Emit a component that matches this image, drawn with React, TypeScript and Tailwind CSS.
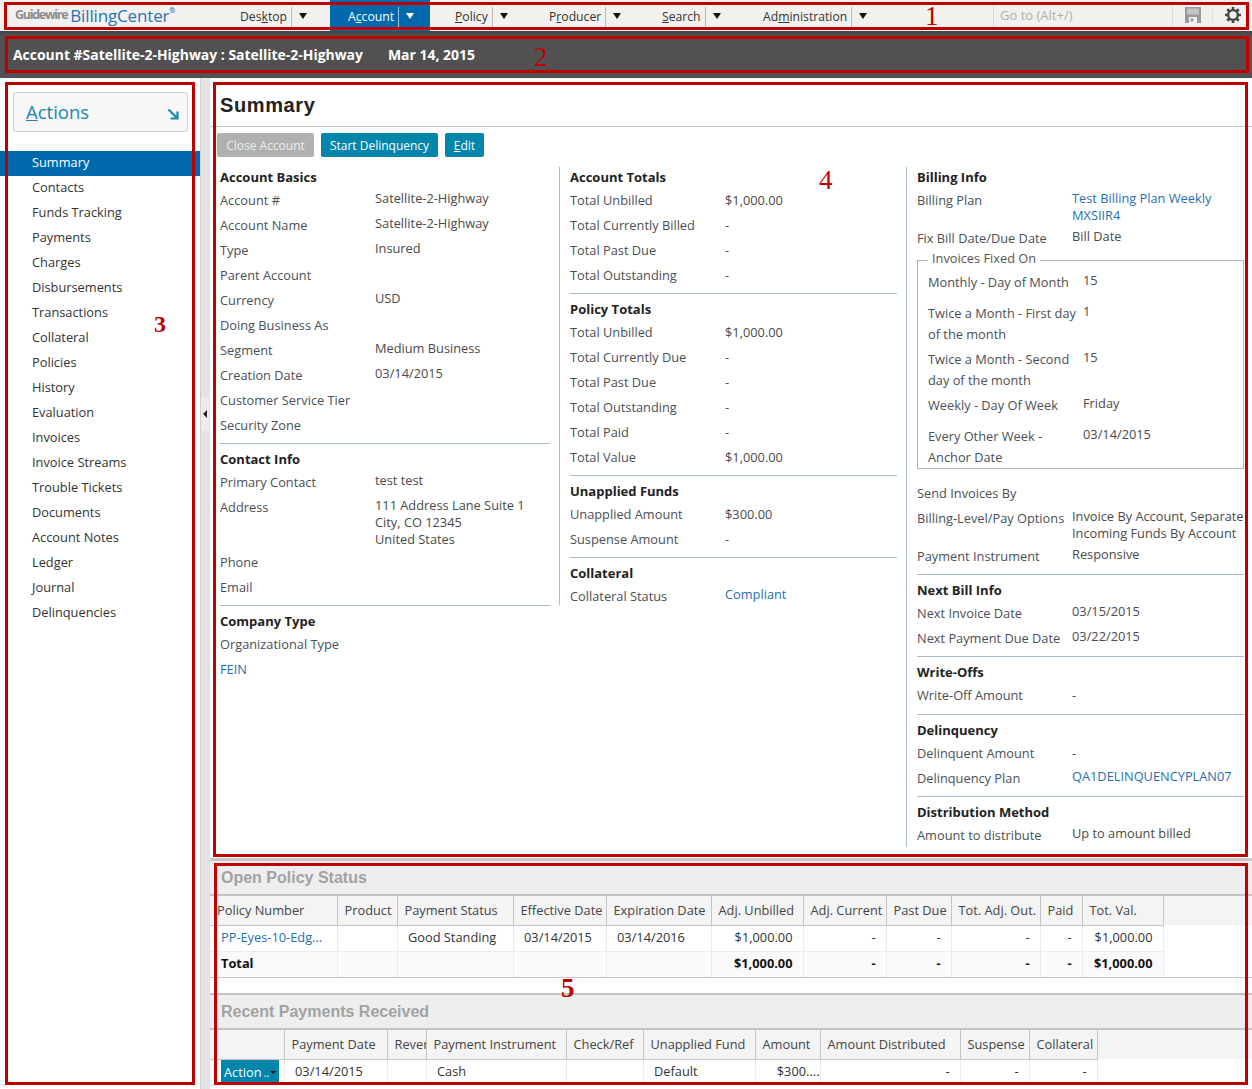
import type { ReactNode } from "react";

interface FieldProps {
  label: ReactNode;
  value?: ReactNode;
  link?: boolean;
  aligned?: boolean;
  className?: string;
}

const navItems = [
  { before: "Des", key: "k", after: "top", width: "w-[108px]" },
  { before: "A", key: "c", after: "count", width: "w-[100px]", active: true },
  { before: "", key: "P", after: "olicy", width: "ml-[7px] w-[94px]" },
  { before: "P", key: "r", after: "oducer", width: "w-[113px]" },
  { before: "", key: "S", after: "earch", width: "w-[101px]" },
  { before: "Ad", key: "m", after: "inistration", width: "w-[135px]" },
];

const sideItems = [
  "Summary",
  "Contacts",
  "Funds Tracking",
  "Payments",
  "Charges",
  "Disbursements",
  "Transactions",
  "Collateral",
  "Policies",
  "History",
  "Evaluation",
  "Invoices",
  "Invoice Streams",
  "Trouble Tickets",
  "Documents",
  "Account Notes",
  "Ledger",
  "Journal",
  "Delinquencies",
];

const policyCols = [
  { title: "Policy Number", width: "w-[127px]" },
  { title: "Product", width: "w-[60px]" },
  { title: "Payment Status", width: "w-[116px]" },
  { title: "Effective Date", width: "w-[93px]" },
  { title: "Expiration Date", width: "w-[105px]" },
  { title: "Adj. Unbilled", width: "w-[92px]" },
  { title: "Adj. Current", width: "w-[83px]" },
  { title: "Past Due", width: "w-[65px]" },
  { title: "Tot. Adj. Out.", width: "w-[89px]" },
  { title: "Paid", width: "w-[42px]" },
  { title: "Tot. Val.", width: "w-[81px]" },
];

const paymentCols = [
  { title: "", width: "w-[74px]" },
  { title: "Payment Date", width: "w-[103px]" },
  { title: "Rever", width: "w-[39px]" },
  { title: "Payment Instrument", width: "w-[140px]" },
  { title: "Check/Ref", width: "w-[77px]" },
  { title: "Unapplied Fund", width: "w-[112px]" },
  { title: "Amount", width: "w-[65px]" },
  { title: "Amount Distributed", width: "w-[140px]" },
  { title: "Suspense", width: "w-[69px]" },
  { title: "Collateral", width: "w-[68px]" },
];

const Field = ({ label, value, link, aligned, className }: FieldProps) => (
  <div className={`flex min-h-[25px] ${className ?? ""}`}>
    <div className="w-[155px] shrink-0 leading-[25px] text-[#4a4f55]">{label}</div>
    <div className={`leading-[17px] ${aligned ? "pt-[4px]" : "pt-[2px]"} ${link ? "text-[#1f6fb2]" : "text-[#4a4a4a]"}`}>
      {value}
    </div>
  </div>
);

const Section = ({
  title,
  first,
  className,
  children,
}: {
  title: string;
  first?: boolean;
  className?: string;
  children: ReactNode;
}) => (
  <section className={`${first ? "" : "mt-[5px] border-t border-[#a9bbcf] pt-[4px]"} ${className ?? ""}`}>
    <h3 className={`font-bold text-[13px] text-[#222] ${first ? "h-[21px] leading-[21px]" : "h-[22px] leading-[22px]"}`}>
      {title}
    </h3>
    {children}
  </section>
);

const FixedRow = ({ label, value, height }: { label: ReactNode; value: string; height: string }) => (
  <div className={`flex ${height}`}>
    <div className="w-[155px] shrink-0 pr-[4px] leading-[21px] text-[#4a4f55]">{label}</div>
    <div className="-mt-[2px] leading-[21px] text-[#4a4a4a]">{value}</div>
  </div>
);

const Accel = ({ before, k, after }: { before: string; k: string; after: string }) => (
  <>
    {before}
    <span className="underline">{k}</span>
    {after}
  </>
);

const TopBar = () => (
  <header className="flex h-[31px] shrink-0 items-stretch bg-[#f3f1ed] text-[12.2px]">
    <div className="flex w-[222px] shrink-0 items-center pl-[15px]">
      <span className="text-[12.5px] font-bold tracking-[-1.3px] text-[#8a8c8d]">Guidewire</span>
      <span className="ml-[3px] text-[17px] tracking-[-0.15px] text-[#2a73b5]">BillingCenter</span>
      <span className="-mt-[9px] text-[7px] font-bold text-[#2a73b5]">®</span>
    </div>
    {navItems.map((item) => (
      <div
        key={item.after}
        className={`flex ${item.width} shrink-0 items-center pl-[18px] ${
          item.active ? "bg-[#0069ac] text-white" : "text-[#333]"
        }`}
      >
        <span className="pt-[2px] leading-[31px]">
          <Accel before={item.before} k={item.key} after={item.after} />
        </span>
        <span className={`ml-[4px] mt-[2px] h-[20px] w-px ${item.active ? "bg-[#9cc4de]" : "bg-[#b8b8b8]"}`} />
        <span
          className={`ml-[7px] h-0 w-0 border-x-[4px] border-t-[6px] border-x-transparent ${
            item.active ? "border-t-white" : "border-t-[#111]"
          }`}
        />
      </div>
    ))}
    {/* spacer up to the search box */}
    <div className="w-[113px] shrink-0" />
    <div className="my-[2px] flex w-[180px] shrink-0 items-center border-x border-[#d9d8d4] pl-[6px] pt-[1px] text-[13px] text-[#aeaeae]">
      Go to (Alt+/)
    </div>
    <div className="flex w-[39px] shrink-0 items-center justify-center pb-[1px]">
      <svg width="16" height="16" viewBox="0 0 16 16">
        <path d="M0 0h16v16H0z" fill="#9a9a9a" />
        <path d="M2 1.5h12v6H2z" fill="#c4c4c2" />
        <path d="M4 10h8v6H4z" fill="#f3f1ed" />
        <path d="M5.5 11.5h3v3h-3z" fill="#9a9a9a" />
      </svg>
    </div>
    <div className="my-[9px] w-px shrink-0 bg-[#dedcd8]" />
    <div className="flex flex-1 items-center pb-[1px] pl-[12px]">
      <svg width="16" height="16" viewBox="0 0 18 18">
        <circle cx="9" cy="9" r="5.4" fill="none" stroke="#444444" strokeWidth="2.6" />
        <path
          d="M9 0v3M9 15v3M0 9h3M15 9h3M2.6 2.6l2.2 2.2M13.2 13.2l2.2 2.2M15.4 2.6l-2.2 2.2M4.8 13.2l-2.2 2.2"
          stroke="#444444"
          strokeWidth="3"
        />
      </svg>
    </div>
  </header>
);

const Sidebar = () => (
  <aside className="flex w-[200px] shrink-0 flex-col bg-white pt-[14px]">
    <div className="ml-[13px] mr-[12px] flex h-[40px] items-center justify-between rounded-[3px] border border-[#cfcfcf] bg-[#f7f7f7] pl-[12px] pr-[8px]">
      <span className="text-[18.5px] text-[#1a86ad]">
        <span className="underline">A</span>ctions
      </span>
      <svg width="12" height="12" viewBox="0 0 12 12" className="mt-[4px]">
        <path d="M1.5 1.5 10 10M10.5 3.5v7h-7" fill="none" stroke="#1a86ad" strokeWidth="2.2" />
      </svg>
    </div>
    <nav className="mt-[19px]">
      {sideItems.map((item, i) => (
        <div
          key={item}
          className={`h-[25px] pl-[32px] ${i === 0 ? "bg-[#0069ac] leading-[23px] text-white" : "leading-[23px] text-[#333]"}`}
        >
          {item}
        </div>
      ))}
    </nav>
  </aside>
);

const Splitter = () => (
  <div className="w-[10px] shrink-0 border-l border-[#cfcfcf] bg-[#e3e3e3] pt-[319px]">
    <div className="flex h-[33px] w-[8px] items-center justify-center bg-[#ececec]">
      <span className="h-0 w-0 border-y-[4px] border-r-[4px] border-y-transparent border-r-[#222]" />
    </div>
  </div>
);

const ColumnOne = () => (
  <div className="w-[350px] shrink-0">
    <div className="border-r border-[#a9bbcf] pb-[5px] pl-[10px] pr-[9px]">
      <Section title="Account Basics" first>
        <Field label="Account #" value="Satellite-2-Highway" />
        <Field label="Account Name" value="Satellite-2-Highway" />
        <Field label="Type" value="Insured" />
        <Field label="Parent Account" />
        <Field label="Currency" value="USD" />
        <Field label="Doing Business As" />
        <Field label="Segment" value="Medium Business" />
        <Field label="Creation Date" value="03/14/2015" />
        <Field label="Customer Service Tier" />
        <Field label="Security Zone" />
      </Section>
      <Section title="Contact Info">
        <Field label="Primary Contact" value="test test" />
        <Field
          label="Address"
          className="h-[55px]"
          value={
            <>
              111 Address Lane Suite 1
              <br />
              City, CO 12345
              <br />
              United States
            </>
          }
        />
        <Field label="Phone" />
        <Field label="Email" />
      </Section>
    </div>
    <div className="-mt-[5px] pl-[10px] pr-[10px]">
      <Section title="Company Type">
        <Field label="Organizational Type" />
        <Field label={<span className="text-[#1f6fb2]">FEIN</span>} />
      </Section>
    </div>
  </div>
);

const ColumnTwo = () => (
  <div className="w-[347px] shrink-0 border-r border-[#a9bbcf] pl-[10px] pr-[9px]">
    <Section title="Account Totals" first>
      <Field aligned label="Total Unbilled" value="$1,000.00" />
      <Field aligned label="Total Currently Billed" value="-" />
      <Field aligned label="Total Past Due" value="-" />
      <Field aligned label="Total Outstanding" value="-" />
    </Section>
    <Section title="Policy Totals">
      <Field aligned label="Total Unbilled" value="$1,000.00" />
      <Field aligned label="Total Currently Due" value="-" />
      <Field aligned label="Total Past Due" value="-" />
      <Field aligned label="Total Outstanding" value="-" />
      <Field aligned label="Total Paid" value="-" />
      <Field aligned label="Total Value" value="$1,000.00" />
    </Section>
    <Section title="Unapplied Funds">
      <Field aligned label="Unapplied Amount" value="$300.00" />
      <Field aligned label="Suspense Amount" value="-" />
    </Section>
    <Section title="Collateral">
      <Field label="Collateral Status" value="Compliant" link />
    </Section>
  </div>
);

const ColumnThree = () => (
  <div className="min-w-0 flex-1 pl-[10px] pr-[8px]">
    <Section title="Billing Info" first>
      <Field
        label="Billing Plan"
        link
        className="h-[38px]"
        value={
          <>
            Test Billing Plan Weekly
            <br />
            MXSIIR4
          </>
        }
      />
      <Field label="Fix Bill Date/Due Date" value="Bill Date" />
      <fieldset className="border border-[#a9b4c6] pl-[10px]">
        <legend className="h-[18px] px-[4px] leading-[15px] text-[#555]">Invoices Fixed On</legend>
        <div className="pt-[3px]">
          <FixedRow label="Monthly - Day of Month" value="15" height="h-[31px]" />
          <FixedRow label="Twice a Month - First day of the month" value="1" height="h-[46px]" />
          <FixedRow label="Twice a Month - Second day of the month" value="15" height="h-[46px]" />
          <FixedRow label="Weekly - Day Of Week" value="Friday" height="h-[31px]" />
          <FixedRow label="Every Other Week - Anchor Date" value="03/14/2015" height="h-[42px]" />
        </div>
      </fieldset>
      <Field label="Send Invoices By" className="mt-[12px]" />
      <Field
        label="Billing-Level/Pay Options"
        className="h-[38px]"
        value={
          <span className="-mr-[8px] block whitespace-nowrap">
            Invoice By Account, Separate
            <br />
            Incoming Funds By Account
          </span>
        }
      />
      <Field label="Payment Instrument" value="Responsive" />
    </Section>
    <Section title="Next Bill Info">
      <Field label="Next Invoice Date" value="03/15/2015" />
      <Field label="Next Payment Due Date" value="03/22/2015" />
    </Section>
    <Section title="Write-Offs">
      <Field aligned label="Write-Off Amount" value="-" />
    </Section>
    <Section title="Delinquency" className="!mt-[6px]">
      <Field aligned label="Delinquent Amount" value="-" />
      <Field label="Delinquency Plan" value="QA1DELINQUENCYPLAN07" link />
    </Section>
    <Section title="Distribution Method">
      <Field label="Amount to distribute" value="Up to amount billed" />
    </Section>
  </div>
);

const Summary = () => (
  <div className="flex h-[780px] shrink-0 flex-col bg-white">
    <div className="h-[49px] shrink-0 border-b border-[#c8c8c8] pl-[10px]">
      <h1 className="pt-[14px] font-['Liberation_Sans',sans-serif] text-[20px] font-bold leading-[26px] tracking-[0.6px] text-[#222]">
        Summary
      </h1>
    </div>
    <div className="mt-[6px] flex h-[24px] shrink-0 gap-[7px] pl-[7px] text-[12px]">
      <button className="w-[97px] rounded-[2px] bg-[#b0b0b0] pt-[1px] text-[#ececec]">Close Account</button>
      <button className="w-[117px] rounded-[2px] bg-[#0085ab] pt-[1px] text-white">Start Delinquency</button>
      <button className="w-[39px] rounded-[2px] bg-[#0085ab] pt-[1px] text-white">
        <span className="underline">E</span>dit
      </button>
    </div>
    <div className="mt-[10px] flex h-[680px] items-stretch">
      <ColumnOne />
      <ColumnTwo />
      <ColumnThree />
    </div>
  </div>
);

const PanelTitle = ({ title, className }: { title: string; className: string }) => (
  <div
    className={`flex shrink-0 items-center border-b-2 border-[#c4c4c4] bg-[#eeeeee] pl-[11px] font-['Liberation_Sans',sans-serif] text-[16px] font-bold text-[#a2a2a2] ${className}`}
  >
    {title}
  </div>
);

const Th = ({ children }: { children?: ReactNode }) => (
  <th className="overflow-hidden whitespace-nowrap border-r border-[#c4c4c4] pl-[7px] text-left font-normal text-[#444]">
    {children}
  </th>
);

const Td = ({ children, className }: { children?: ReactNode; className?: string }) => (
  <td className={`overflow-hidden whitespace-nowrap border-r border-[#ececec] ${className ?? ""}`}>{children}</td>
);

const money = "pr-[10px] text-right";
const plain = "pl-[10.5px]";

const PolicyTable = () => (
  <table className="w-[953px] table-fixed border-collapse text-[#333]">
    <colgroup>
      {policyCols.map((col) => (
        <col key={col.title} className={col.width} />
      ))}
    </colgroup>
    <tbody>
      <tr className="h-[29px]">
        {policyCols.map((col) => (
          <Th key={col.title}>{col.title}</Th>
        ))}
      </tr>
      <tr className="h-[26px] border-t border-[#c4c4c4]">
        <Td className="pl-[11px] text-[#1f6fb2]">PP-Eyes-10-Edg...</Td>
        <Td />
        <Td className={plain}>Good Standing</Td>
        <Td className={plain}>03/14/2015</Td>
        <Td className={plain}>03/14/2016</Td>
        <Td className={money}>$1,000.00</Td>
        <Td className={money}>-</Td>
        <Td className={money}>-</Td>
        <Td className={money}>-</Td>
        <Td className={money}>-</Td>
        <Td className={money}>$1,000.00</Td>
      </tr>
      <tr className="h-[26px] border-t border-[#ececec] bg-[#fafafa] font-bold text-[#111] [&>td]:pb-[2px]">
        <Td className="pl-[11px]">Total</Td>
        <Td />
        <Td />
        <Td />
        <Td />
        <Td className={money}>$1,000.00</Td>
        <Td className={money}>-</Td>
        <Td className={money}>-</Td>
        <Td className={money}>-</Td>
        <Td className={money}>-</Td>
        <Td className={money}>$1,000.00</Td>
      </tr>
    </tbody>
  </table>
);

const PaymentsTable = () => (
  <table className="w-[887px] table-fixed border-collapse text-[#333]">
    <colgroup>
      {paymentCols.map((col) => (
        <col key={col.title} className={col.width} />
      ))}
    </colgroup>
    <tbody>
      <tr className="h-[29px]">
        {paymentCols.map((col) => (
          <Th key={col.title}>{col.title}</Th>
        ))}
      </tr>
      <tr className="h-[26px] border-t border-[#c4c4c4] [&>td]:pb-[2px]">
        <Td className="!pb-0 pl-[11px]">
          <div className="flex h-[25px] w-[58px] items-center bg-[#0085ab] pl-[3px] text-white">
            Action
            <span className="ml-[2px] self-end pb-[7px] text-[11px] leading-none">..</span>
            <span className="ml-[1px] h-0 w-0 border-x-[3px] border-t-[3px] border-x-transparent border-t-[#111]" />
          </div>
        </Td>
        <Td className={plain}>03/14/2015</Td>
        <Td />
        <Td className={plain}>Cash</Td>
        <Td />
        <Td className={plain}>Default</Td>
        <Td className="text-right">$300....</Td>
        <Td className={money}>-</Td>
        <Td className={money}>-</Td>
        <Td className={money}>-</Td>
      </tr>
    </tbody>
  </table>
);

const Panels = () => (
  <div className="flex min-h-0 flex-1 flex-col border-t-[3px] border-[#c8c8c8] bg-white">
    <PanelTitle title="Open Policy Status" className="h-[35px]" />
    <div className="h-[82px] shrink-0 border-b border-[#c4c4c4] bg-[linear-gradient(to_bottom,#f4f4f4_29px,#ffffff_29px)]">
      <PolicyTable />
    </div>
    <div className="h-[15px] shrink-0" />
    <PanelTitle title="Recent Payments Received" className="h-[37px] border-t-2" />
    <div className="flex-1 bg-[linear-gradient(to_bottom,#f4f4f4_29px,#ffffff_29px)]">
      <PaymentsTable />
    </div>
  </div>
);

// red callouts drawn on top of the captured screen
const Callouts = () => (
  <>
    <div className="absolute left-[4px] top-[2px] h-[28px] w-[1245px] border-[3px] border-[#bf0000]" />
    <div className="absolute left-[5px] top-[36px] h-[37px] w-[1244px] border-[3px] border-[#bf0000]" />
    <div className="absolute left-[5px] top-[82px] h-[1003px] w-[190px] border-[3px] border-[#bf0000]" />
    <div className="absolute left-[213px] top-[82px] h-[775px] w-[1035px] border-[3px] border-[#bf0000]" />
    <div className="absolute left-[214px] top-[863px] h-[222px] w-[1034px] border-[3px] border-[#bf0000]" />
    <span className="absolute left-[925px] top-[1px] font-['Liberation_Serif',serif] text-[27px] leading-[30px] text-[#bf0000]">1</span>
    <span className="absolute left-[534px] top-[42px] font-['Liberation_Serif',serif] text-[27px] leading-[30px] text-[#bf0000]">2</span>
    <span className="absolute left-[154px] top-[309px] font-['Liberation_Serif',serif] text-[24px] font-bold leading-[30px] text-[#bf0000]">3</span>
    <span className="absolute left-[819px] top-[165px] font-['Liberation_Serif',serif] text-[27px] leading-[30px] text-[#bf0000]">4</span>
    <span className="absolute left-[561px] top-[973px] font-['Liberation_Serif',serif] text-[27px] font-bold leading-[30px] text-[#bf0000]">5</span>
  </>
);

export default function App() {
  return (
    <div className="relative flex h-[1089px] w-[1252px] flex-col overflow-hidden bg-white font-['Open_Sans',sans-serif] text-[12.8px]">
      <TopBar />
      <div className="flex h-[47px] shrink-0 items-center gap-[25px] bg-[linear-gradient(to_bottom,#444444,#515151_5px)] pl-[13px] pt-[1px] text-[13.95px] font-bold text-white">
        <span>Account #Satellite-2-Highway : Satellite-2-Highway</span>
        <span>Mar 14, 2015</span>
      </div>
      <div className="flex min-h-0 flex-1">
        <Sidebar />
        <Splitter />
        <main className="flex min-w-0 flex-1 flex-col">
          <Summary />
          <Panels />
        </main>
      </div>
      <Callouts />
    </div>
  );
}
